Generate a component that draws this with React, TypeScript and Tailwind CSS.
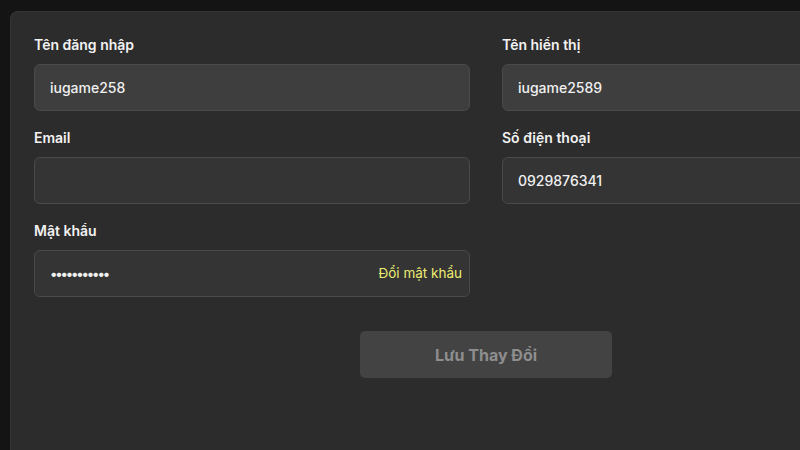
import { useState } from "react";

function Field({
  label,
  value,
  light,
  type = "text",
  action,
}: {
  label: string;
  value: string;
  light?: boolean;
  type?: string;
  action?: string;
}) {
  const [v, setV] = useState(value);
  return (
    <div className="flex flex-col">
      <label className="h-[20px] text-[14px] leading-[20px] font-semibold text-[#f2f2f2]">{label}</label>
      <div
        className={`relative mt-[9px] flex h-[47px] items-center rounded-[6px] border border-[#4a4a4a] ${
          light ? "bg-[#3e3e3e]" : "bg-[#343434]"
        }`}
      >
        <input
          type={type}
          value={v}
          onChange={(e) => setV(e.target.value)}
          className={`h-full w-full bg-transparent px-[15px] text-[14px] font-medium text-[#f0f0f0] outline-none ${
            type === "password" ? "tracking-[-2.2px]" : ""
          }`}
        />
        {action && (
          <button className="absolute right-[7px] text-[13.5px] text-[#eded72]">{action}</button>
        )}
      </div>
    </div>
  );
}

export default function App() {
  return (
    <div className="h-[450px] w-[800px] overflow-hidden bg-[#141414] pl-[10px] pt-[11px] font-['Inter','Liberation_Sans',sans-serif]">
      <div className="h-[480px] w-[951px] rounded-tl-[8px] border-t border-l border-[#343434] bg-[#2c2c2c] px-[23px] pt-[23px]">
        <div className="grid grid-cols-[436px_436px] gap-x-[32px] gap-y-[17px]">
          <Field label="Tên đăng nhập" value="iugame258" light />
          <Field label="Tên hiển thị" value="iugame2589" light />
          <Field label="Email" value="" />
          <Field label="Số điện thoại" value="0929876341" />
          <Field label="Mật khẩu" value="12345678901" type="password" action="Đổi mật khẩu" />
        </div>
        <div className="mt-[34px] flex justify-center">
          <button className="h-[47px] w-[252px] rounded-[5px] bg-[#434343] text-[16px] font-bold text-[#8e8e8e]">
            Lưu Thay Đổi
          </button>
        </div>
      </div>
    </div>
  );
}
